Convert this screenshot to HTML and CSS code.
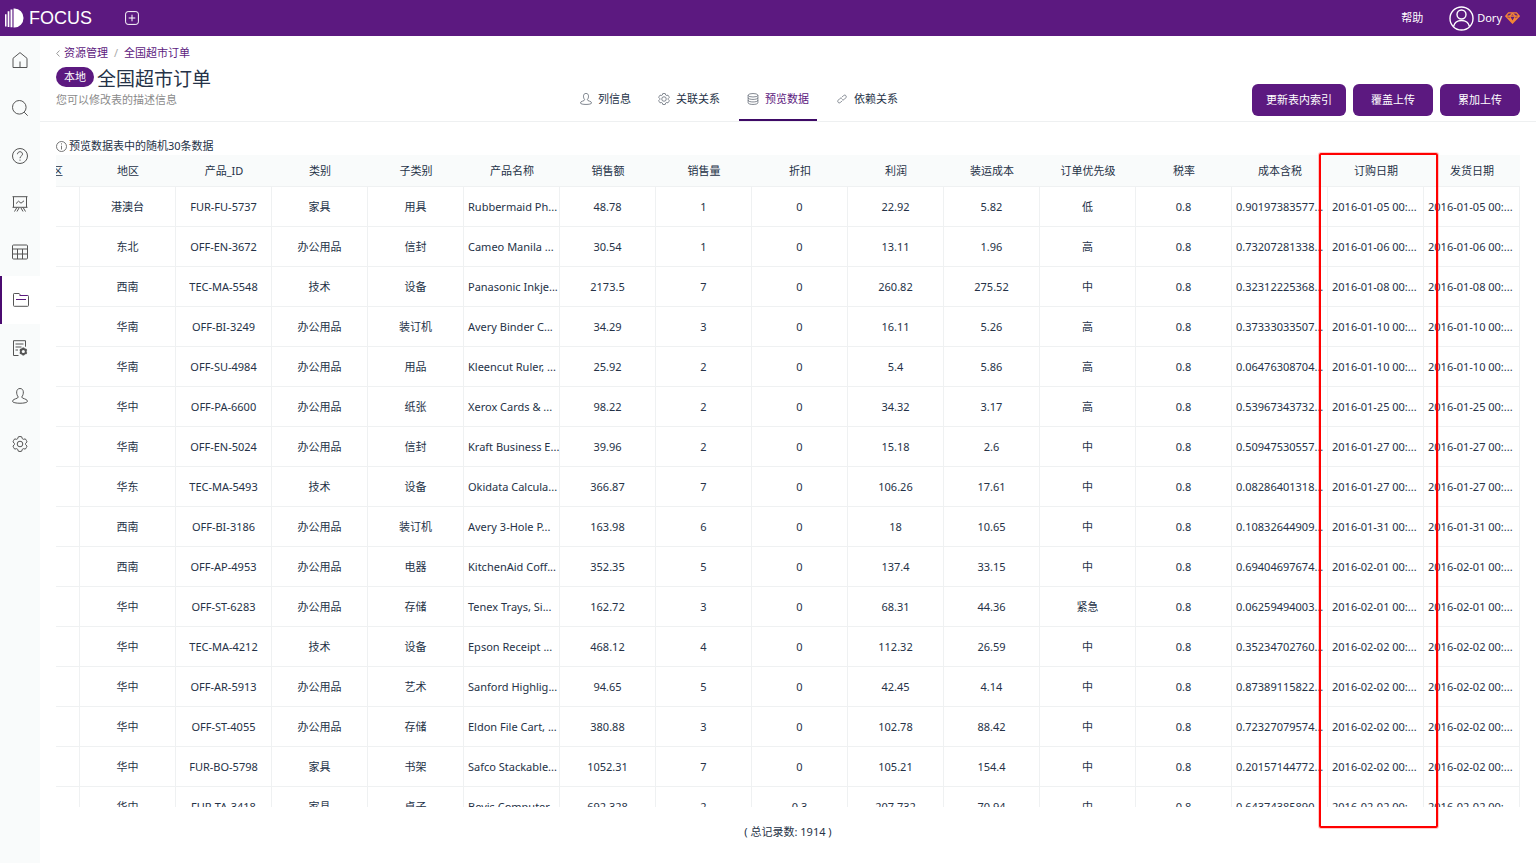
FILE: index.html
```html
<!DOCTYPE html>
<html lang="zh-CN">
<head>
<meta charset="utf-8">
<title>全国超市订单</title>
<link rel="stylesheet" href="styles.css">
</head>
<body>
<header class="topbar">
  <a class="brand" href="#">
    <svg class="brand-mark" viewBox="0 0 20 20" fill="#fff"><path d="M0 6h1.600v13H0zM2.800 3h1.800v16.500H2.800zM5.800 1h2v18.700h-2zM9 0h1a9.500 10 0 0 1 0 20H9z"/></svg>
    <span>FOCUS</span>
  </a>
  <button class="icon-btn" type="button" aria-label="新建">
    <svg width="14" height="14" viewBox="0 0 14 14" fill="none" stroke="#fff"><rect x=".6" y=".6" width="12.800" height="12.800" rx="2.500"/><path d="M7 3.700v6.600M3.700 7h6.600"/></svg>
  </button>
  <nav class="account">
    <a href="#">帮助</a>
    <a class="user" href="#">
      <svg width="25" height="25" viewBox="0 0 25 25" fill="none" stroke="#fff" stroke-width="1.400"><circle cx="12.500" cy="12.500" r="11.500"/><circle cx="12.500" cy="8.500" r="4.500"/><path d="M4.500 20.500c1-4 4-6 8-6s7 2 8 6"/></svg>
      <span>Dory</span>
      <svg width="15" height="12" viewBox="0 0 15 12" fill="none" stroke="#f58634" stroke-width="1.200"><path d="M3.500.8h8l2.800 3.400-6.800 7-6.800-7zM.8 4.200h13.400M4.500 4.200l3 5.500 3-5.500L7.500 1.500zM3 5.700l4.500 3.600L12 5.700"/></svg>
    </a>
  </nav>
</header>
<div class="shell">
  <nav class="sidebar">
    <a class="side-item" href="#" aria-label="首页"><svg viewBox="0 0 16 16"><path d="M1 6.300 8 .6l7 5.700v9.200H1zM8 15.500V9.500"/></svg></a>
    <a class="side-item" href="#" aria-label="搜索"><svg viewBox="0 0 16 16"><circle cx="7.300" cy="7.300" r="6.800"/><path d="m12.200 12.200 3.500 3.500"/></svg></a>
    <a class="side-item" href="#" aria-label="问答"><svg viewBox="0 0 16 16"><circle cx="8" cy="8" r="7.500"/><path d="M5.500 6.200c0-3.300 5-3.300 5 0C10.500 8 8 8 8 10.200M8 11.600v1.100"/></svg></a>
    <a class="side-item" href="#" aria-label="看板"><svg viewBox="0 0 16 16"><path d="M.5.700h15M1.500.7v10.600M14.500.7v10.600M.5 11.300h15M4 7.600l2.500-2.400 2.500 2 3-2.400M5 11.300 2.500 15.500M11 11.300l2.500 4.200M7 12l-2 3.500M9 12l2 3.500"/></svg></a>
    <a class="side-item" href="#" aria-label="数据表"><svg viewBox="0 0 16 16"><rect x=".5" y="1" width="15" height="14" rx="1"/><path d="M.5 5h15M.5 10h15M5.500 5v10M10.500 5v10"/></svg></a>
    <a class="side-item active" href="#" aria-label="资源管理"><svg viewBox="0 0 16 16"><path d="M.5 13.500V2.200q0-.7.700-.7h5l1.500 2h7q.8 0 .8.800v9.200q0 .8-.8.800H1.300q-.8 0-.8-.8z"/><path class="accent" d="M6.500 3.500h8M3 7.500h10"/></svg></a>
    <a class="side-item" href="#" aria-label="任务"><svg viewBox="0 0 16 16"><path d="M6.500 15.500h-5V.7h12v6M3.500 4h8M3.500 7h6M3.500 10H6"/><circle cx="11.300" cy="11.500" r="2.500" stroke-width="1.800"/><path stroke-width="1.800" d="M11.300 7.500v1.500M11.300 14v1.500M7.800 9.500l1.400.8M13.400 12.700l1.400.8M7.800 13.500l1.400-.8M13.400 10.300l1.400-.8"/></svg></a>
    <a class="side-item" href="#" aria-label="用户"><svg viewBox="0 0 16 16"><path d="M6.300 9C4 6.500 3.700.5 8 .5S12 6.500 9.700 9c0 2 5.800 1.500 5.800 4.300 0 2.600-15 2.600-15 0C.5 10.500 6.300 11 6.300 9z"/></svg></a>
    <a class="side-item" href="#" aria-label="设置"><svg viewBox="0 0 16 16"><circle cx="8" cy="8" r="2.800"/><path d="M6.300.8q1.700-.6 3.400 0l.6 1.900 1 .6 2-.4q1.200 1.300 1.700 3l-1.400 1.500v1.200l1.400 1.500q-.5 1.700-1.700 3l-2-.4-1 .6-.6 1.900q-1.700.6-3.400 0l-.6-1.900-1-.6-2 .4Q1.500 11.800 1 10.100l1.400-1.500V7.400L1 5.900q.5-1.700 1.700-3l2 .4 1-.6z"/></svg></a>
  </nav>
  <main class="main">
    <section class="page-head">
      <nav class="crumbs">
        <svg width="4" height="7" viewBox="0 0 4 7" fill="none" stroke="#999"><path d="M3.500.5.700 3.500l2.800 3"/></svg>
        <a href="#">资源管理</a><span class="slash">/</span><a href="#">全国超市订单</a>
      </nav>
      <div class="head-row">
        <div class="title-block">
          <div class="title-line"><span class="badge">本地</span><h1>全国超市订单</h1></div>
          <p class="desc">您可以修改表的描述信息</p>
        </div>
        <nav class="tabs">
          <a class="tab" href="#"><svg viewBox="0 0 16 16"><path d="M6.300 9C4 6.500 3.700.5 8 .5S12 6.500 9.700 9c0 2 5.800 1.500 5.800 4.300 0 2.600-15 2.600-15 0C.5 10.500 6.300 11 6.300 9z"/></svg>列信息</a>
          <a class="tab" href="#"><svg viewBox="0 0 16 16"><circle cx="8" cy="8" r="3"/><path d="M6.300.8q1.700-.6 3.400 0l.6 1.900 1 .6 2-.4q1.200 1.300 1.700 3l-1.400 1.500v1.200l1.400 1.500q-.5 1.700-1.700 3l-2-.4-1 .6-.6 1.900q-1.700.6-3.400 0l-.6-1.900-1-.6-2 .4Q1.500 11.800 1 10.100l1.400-1.500V7.400L1 5.900q.5-1.700 1.700-3l2 .4 1-.6z"/></svg>关联关系</a>
          <a class="tab active" href="#"><svg viewBox="0 0 16 16"><ellipse cx="8" cy="3" rx="6.500" ry="2.300"/><path d="M1.500 3v10c0 3 13 3 13 0V3M1.500 6.300c0 3 13 3 13 0M1.500 9.700c0 3 13 3 13 0"/></svg>预览数据</a>
          <a class="tab" href="#"><svg viewBox="0 0 16 16"><path d="M8 5.500 10 3.500c2-2 5 .8 3 2.900L11 8.500c-1 1-2.300.9-3 0M8 10.500 6 12.500c-2 2-5-.8-3-2.900L5 7.500c1-1 2.300-.9 3 0"/></svg>依赖关系</a>
        </nav>
        <div class="actions">
          <button type="button">更新表内索引</button>
          <button type="button">覆盖上传</button>
          <button type="button">累加上传</button>
        </div>
      </div>
    </section>
    <section class="preview">
      <p class="hint"><svg width="11" height="11" viewBox="0 0 11 11" fill="none" stroke="#555" stroke-width=".8"><circle cx="5.500" cy="5.500" r="5"/><path d="M5.500 2.300v1.200M5.500 4.700v3.800"/></svg>预览数据表中的随机30条数据</p>
      <div class="table-area">
        <div class="table-clip">
          <table>
            <colgroup><col class="col-cut"></colgroup>
            <thead><tr><th><span class="cut">区</span><th>地区<th>产品_ID<th>类别<th>子类别<th>产品名称<th>销售额<th>销售量<th>折扣<th>利润<th>装运成本<th>订单优先级<th>税率<th>成本含税<th>订购日期<th>发货日期</tr></thead>
            <tbody>
              <tr><td><td>港澳台<td>FUR-FU-5737<td>家具<td>用具<td>Rubbermaid Ph...<td>48.78<td>1<td>0<td>22.92<td>5.82<td>低<td>0.8<td>0.90197383577...<td>2016-01-05 00:...<td>2016-01-05 00:...</tr>
              <tr><td><td>东北<td>OFF-EN-3672<td>办公用品<td>信封<td>Cameo Manila ...<td>30.54<td>1<td>0<td>13.11<td>1.96<td>高<td>0.8<td>0.73207281338...<td>2016-01-06 00:...<td>2016-01-06 00:...</tr>
              <tr><td><td>西南<td>TEC-MA-5548<td>技术<td>设备<td>Panasonic Inkje...<td>2173.5<td>7<td>0<td>260.82<td>275.52<td>中<td>0.8<td>0.32312225368...<td>2016-01-08 00:...<td>2016-01-08 00:...</tr>
              <tr><td><td>华南<td>OFF-BI-3249<td>办公用品<td>装订机<td>Avery Binder C...<td>34.29<td>3<td>0<td>16.11<td>5.26<td>高<td>0.8<td>0.37333033507...<td>2016-01-10 00:...<td>2016-01-10 00:...</tr>
              <tr><td><td>华南<td>OFF-SU-4984<td>办公用品<td>用品<td>Kleencut Ruler, ...<td>25.92<td>2<td>0<td>5.4<td>5.86<td>高<td>0.8<td>0.06476308704...<td>2016-01-10 00:...<td>2016-01-10 00:...</tr>
              <tr><td><td>华中<td>OFF-PA-6600<td>办公用品<td>纸张<td>Xerox Cards &amp; ...<td>98.22<td>2<td>0<td>34.32<td>3.17<td>高<td>0.8<td>0.53967343732...<td>2016-01-25 00:...<td>2016-01-25 00:...</tr>
              <tr><td><td>华南<td>OFF-EN-5024<td>办公用品<td>信封<td>Kraft Business E...<td>39.96<td>2<td>0<td>15.18<td>2.6<td>中<td>0.8<td>0.50947530557...<td>2016-01-27 00:...<td>2016-01-27 00:...</tr>
              <tr><td><td>华东<td>TEC-MA-5493<td>技术<td>设备<td>Okidata Calcula...<td>366.87<td>7<td>0<td>106.26<td>17.61<td>中<td>0.8<td>0.08286401318...<td>2016-01-27 00:...<td>2016-01-27 00:...</tr>
              <tr><td><td>西南<td>OFF-BI-3186<td>办公用品<td>装订机<td>Avery 3-Hole P...<td>163.98<td>6<td>0<td>18<td>10.65<td>中<td>0.8<td>0.10832644909...<td>2016-01-31 00:...<td>2016-01-31 00:...</tr>
              <tr><td><td>西南<td>OFF-AP-4953<td>办公用品<td>电器<td>KitchenAid Coff...<td>352.35<td>5<td>0<td>137.4<td>33.15<td>中<td>0.8<td>0.69404697674...<td>2016-02-01 00:...<td>2016-02-01 00:...</tr>
              <tr><td><td>华中<td>OFF-ST-6283<td>办公用品<td>存储<td>Tenex Trays, Si...<td>162.72<td>3<td>0<td>68.31<td>44.36<td>紧急<td>0.8<td>0.06259494003...<td>2016-02-01 00:...<td>2016-02-01 00:...</tr>
              <tr><td><td>华中<td>TEC-MA-4212<td>技术<td>设备<td>Epson Receipt ...<td>468.12<td>4<td>0<td>112.32<td>26.59<td>中<td>0.8<td>0.35234702760...<td>2016-02-02 00:...<td>2016-02-02 00:...</tr>
              <tr><td><td>华中<td>OFF-AR-5913<td>办公用品<td>艺术<td>Sanford Highlig...<td>94.65<td>5<td>0<td>42.45<td>4.14<td>中<td>0.8<td>0.87389115822...<td>2016-02-02 00:...<td>2016-02-02 00:...</tr>
              <tr><td><td>华中<td>OFF-ST-4055<td>办公用品<td>存储<td>Eldon File Cart, ...<td>380.88<td>3<td>0<td>102.78<td>88.42<td>中<td>0.8<td>0.72327079574...<td>2016-02-02 00:...<td>2016-02-02 00:...</tr>
              <tr><td><td>华中<td>FUR-BO-5798<td>家具<td>书架<td>Safco Stackable...<td>1052.31<td>7<td>0<td>105.21<td>154.4<td>中<td>0.8<td>0.20157144772...<td>2016-02-02 00:...<td>2016-02-02 00:...</tr>
              <tr><td><td>华中<td>FUR-TA-3418<td>家具<td>桌子<td>Bevis Computer ...<td>692.328<td>2<td>0.3<td>207.732<td>70.94<td>中<td>0.8<td>0.64374385890...<td>2016-02-02 00:...<td>2016-02-02 00:...</tr>
            </tbody>
          </table>
        </div>
        <div class="highlight"></div>
      </div>
      <p class="total">( 总记录数: 1914 )</p>
    </section>
  </main>
</div>
</body>
</html>
```
FILE: styles.css
```css
* { box-sizing: border-box; }
html, body { height: 100%; }
body {
  margin: 0;
  display: flex;
  flex-direction: column;
  overflow: hidden;
  background: #fff;
  color: #253247;
  font: 11px/16px "Noto Sans", "Noto Sans CJK SC", sans-serif;
}
a { color: inherit; text-decoration: none; }
p, h1 { margin: 0; }
button { font: inherit; border: 0; cursor: pointer; }
svg { flex: none; }

.topbar {
  flex: none;
  height: 36px;
  display: flex;
  align-items: center;
  padding: 0 16px 0 5px;
  background: #5c1980;
  color: #fff;
}
.brand {
  display: flex;
  align-items: center;
  gap: 5px;
  font: 18px/20px "Liberation Sans", Arial, sans-serif;
}
.brand-mark { width: 19px; height: 20px; }
.icon-btn { display: flex; margin-left: 33px; padding: 0; background: none; }
.account { display: flex; align-items: center; gap: 26px; margin-left: auto; }
.user { display: flex; align-items: center; gap: 3px; }

.shell { flex: 1; min-height: 0; display: flex; }
.sidebar { flex: none; width: 40px; background: #f9fbfb; }
.side-item { height: 48px; display: flex; align-items: center; justify-content: center; }
.side-item svg { width: 16px; height: 16px; fill: none; stroke: #555; stroke-width: 1; }
.side-item.active { background: #fff; border-left: 2px solid #4b0a70; }
.side-item .accent { stroke: #5c1980; }

.main { flex: 1; min-width: 0; display: flex; flex-direction: column; }
.page-head { flex: none; padding: 9px 16px 0; border-bottom: 1px solid #eef0f1; }
.crumbs { display: flex; align-items: center; color: #5c1980; }
.crumbs svg { margin-right: 4px; }
.slash { margin: 0 6px; color: #aaa; }
.head-row { display: flex; justify-content: space-between; height: 60px; }
.title-block { width: 170px; padding-top: 4px; white-space: nowrap; }
.title-line { display: flex; align-items: flex-start; gap: 3px; height: 27px; }
.badge { margin-top: 2px; padding: 0 8px; border-radius: 10px; background: #5c1980; color: #fff; line-height: 20px; }
h1 { font-size: 19px; line-height: 28px; font-weight: 400; }
.desc { color: #8a8a8a; }
.tabs { display: flex; align-items: flex-end; gap: 11px; }
.tab {
  display: flex;
  align-items: center;
  gap: 6px;
  height: 46px;
  padding: 3px 8px 0;
  border-bottom: 2px solid transparent;
}
.tab svg { width: 12px; height: 12px; fill: none; stroke: #59616e; }
.tab.active { color: #5c1980; border-color: #3e0a66; }
.actions { display: flex; align-items: flex-start; gap: 7px; padding-top: 23px; }
.actions button {
  height: 32px;
  padding: 0 18px;
  border-radius: 6px;
  background: #5c1980;
  color: #fff;
}
.actions button:first-child { padding: 0 14px; }

.preview { flex: 1; min-height: 0; display: flex; flex-direction: column; padding: 15px 16px 23px; }
.hint { display: flex; align-items: center; gap: 2px; height: 18px; }
.table-area { position: relative; flex: 1; min-height: 0; }
.table-clip { height: 100%; overflow: hidden; }
table { width: 100%; table-layout: fixed; border-collapse: separate; border-spacing: 0; }
.col-cut { width: 24px; }
th, td {
  padding: 0 4px;
  border: 0 solid #eff1f2;
  border-bottom-width: 1px;
  text-align: center;
  font-weight: 400;
  white-space: nowrap;
}
th { height: 32px; background: #f9fbfb; }
td { height: 40px; border-right-width: 1px; }
td:nth-child(6), td:nth-child(n + 14) { text-align: left; }
th:first-child { padding: 0 17px 0 0; }
.cut { display: flex; justify-content: flex-end; overflow: hidden; }
.highlight {
  position: absolute;
  top: -2px;
  right: 82px;
  bottom: -21px;
  width: 119px;
  border: 2px solid #f00;
  border-radius: 2px;
  box-shadow: 0 0 0 1px rgba(255, 120, 120, .4);
}
.total { padding-top: 17px; text-align: center; }
```
